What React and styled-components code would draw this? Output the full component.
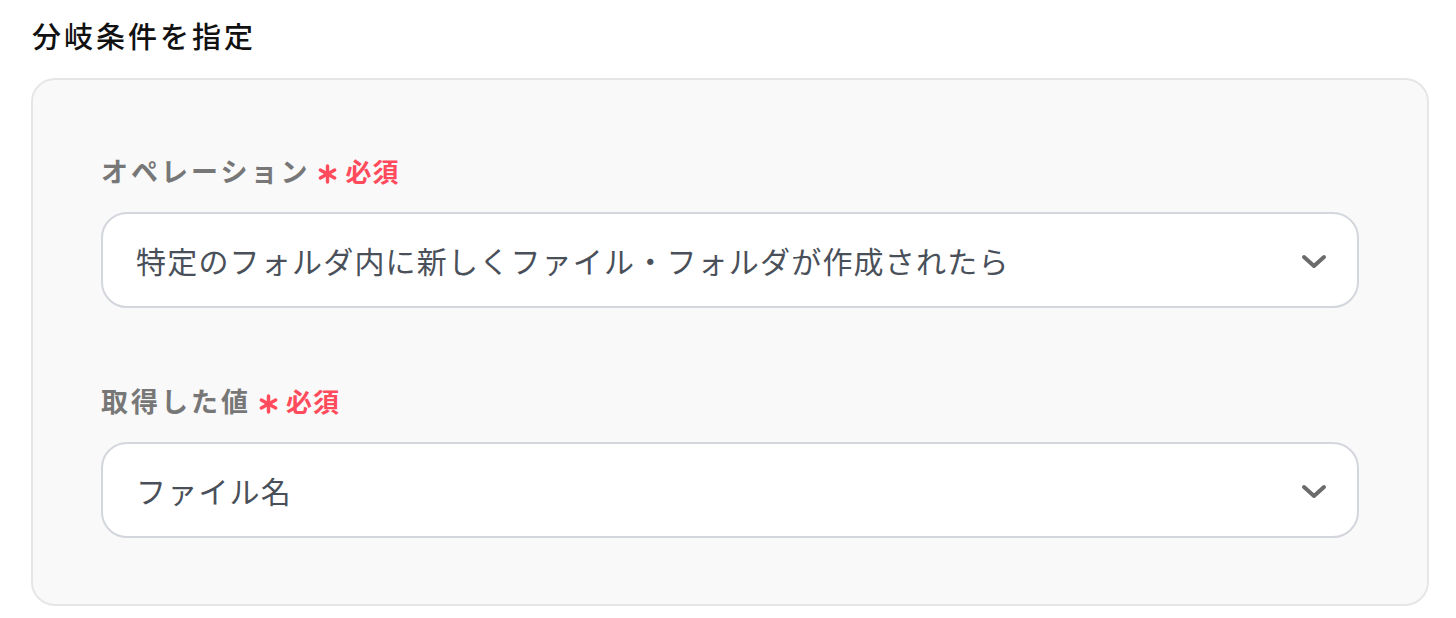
import React from "react";
import styled, { createGlobalStyle } from "styled-components";

const GlobalStyle = createGlobalStyle`
  body {
    margin: 0;
    background: #ffffff;
    font-family: "Noto Sans CJK JP", "Noto Sans", sans-serif;
  }
`;

const fields = [
  { label: "オペレーション", value: "特定のフォルダ内に新しくファイル・フォルダが作成されたら" },
  { label: "取得した値", value: "ファイル名" },
];

const App = () => {
  return (
    <>
      <GlobalStyle />
      <Page>
        <Title>分岐条件を指定</Title>
        <Panel>
          {fields.map((f) => (
            <Field key={f.label}>
              <Label>
                {f.label}
                <Required>
                  <svg width="21" height="20" viewBox="0 0 21 20">
                    <g stroke="#ff4b5c" strokeWidth="3.4" strokeLinecap="round">
                      <line x1="10.5" y1="2" x2="10.5" y2="18" />
                      <line x1="3.3" y1="6" x2="17.7" y2="14" />
                      <line x1="3.3" y1="14" x2="17.7" y2="6" />
                    </g>
                  </svg>
                  必須
                </Required>
              </Label>
              <Select>
                <span>{f.value}</span>
                <svg width="26" height="16" viewBox="0 0 26 16">
                  <path d="M3 3 L13 12 L23 3" fill="none" stroke="#6b6b6b" strokeWidth="4" strokeLinecap="round" strokeLinejoin="round" />
                </svg>
              </Select>
            </Field>
          ))}
        </Panel>
      </Page>
    </>
  );
};

export default App;

const Page = styled.div`
  padding: 15px 27px 0 31px;
`;

const Title = styled.h2`
  margin: 0 0 23px 1px;
  font-size: 29px;
  line-height: 40px;
  font-weight: 500;
  letter-spacing: 3px;
  color: #111111;
`;

const Panel = styled.div`
  display: flex;
  flex-direction: column;
  gap: 75px;
  background: #f9f9f9;
  border: 2px solid #e6e6e6;
  border-radius: 24px;
  padding: 73px 68px 66px 68px;
`;

const Field = styled.div`
  display: flex;
  flex-direction: column;
  gap: 23px;
`;

const Label = styled.div`
  display: flex;
  align-items: center;
  font-size: 27px;
  line-height: 36px;
  font-weight: 700;
  letter-spacing: 3px;
  color: #777777;
`;

const Required = styled.span`
  display: inline-flex;
  align-items: center;
  gap: 7px;
  margin-left: 7px;
  font-size: 26px;
  font-weight: 700;
  letter-spacing: 1px;
  color: #ff4b5c;
  svg {
    margin-top: 6px;
  }
`;

const Select = styled.div`
  display: flex;
  align-items: center;
  justify-content: space-between;
  height: 96px;
  box-sizing: border-box;
  padding: 0 30px 0 33px;
  background: #ffffff;
  border: 2px solid #d3d6dc;
  border-radius: 26px;
  font-size: 30px;
  letter-spacing: 1.2px;
  color: #4a5059;
  svg {
    margin-top: 4px;
  }
`;
